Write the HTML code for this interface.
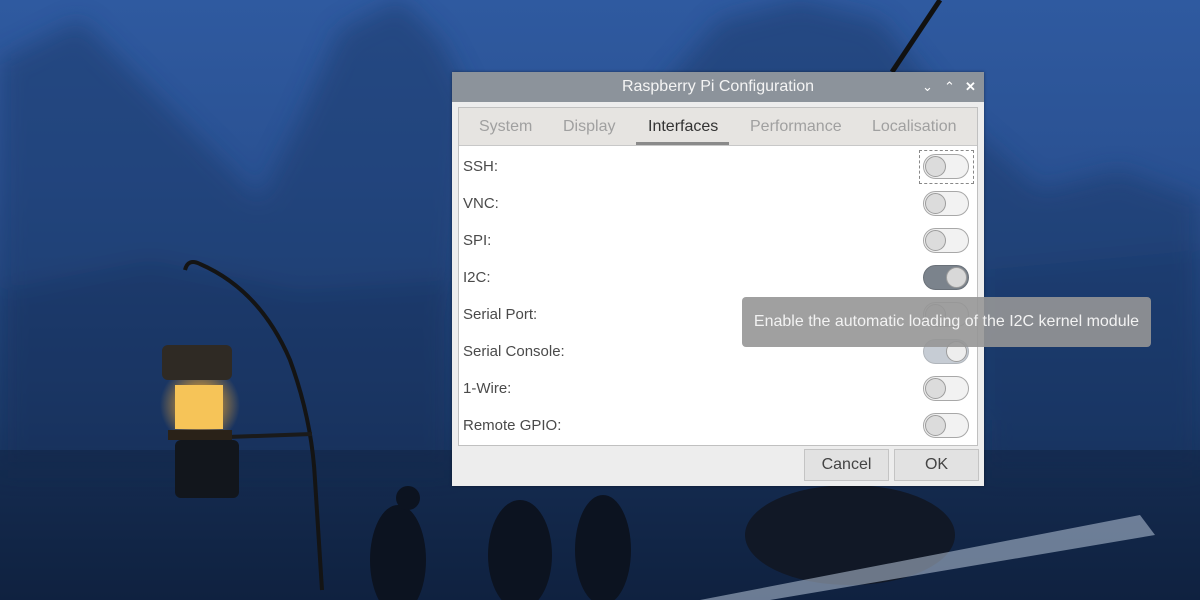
<!DOCTYPE html>
<html><head><meta charset="utf-8"><style>
*{margin:0;padding:0;box-sizing:border-box}
body{width:1200px;height:600px;overflow:hidden;position:relative;font-family:"Liberation Sans",sans-serif;
background:linear-gradient(180deg,#2f5aa0 0%,#2a5192 30%,#234780 50%,#1d3c6c 70%,#142b50 88%,#0f2140 100%)}
.bg{position:absolute;left:0;top:0}
.dlg{position:absolute;left:452px;top:72px;width:532px;height:414px;background:#ededed;box-shadow:0 0 3px rgba(0,0,0,.4)}
.title{height:30px;background:#8c939b;color:#f4f4f4;font-size:16px;text-align:center;line-height:30px;position:relative}
.ctl{position:absolute;top:0;font-size:13px;color:#fff}
.nb{position:absolute;left:6px;top:35px;width:520px;height:339px;border:1px solid #c0c0c0;background:#fff}
.tabs{height:38px;background:#e6e4e1;border-bottom:1px solid #c8c8c8;position:relative;font-size:16px;color:#a0a0a0}
.tabs span{position:absolute;top:10px}
.row{position:absolute;left:4px;font-size:15px;color:#4a4a4a}
.tg{position:absolute;left:464px;width:46px;height:25px;border-radius:13px;border:1px solid #a8a8a8;background:#f2f2f2}
.tg i{position:absolute;left:1px;top:1px;width:21px;height:21px;border-radius:50%;background:#dcdcdc;border:1px solid #9c9c9c}
.btn{position:absolute;top:377px;height:32px;border:1px solid #c4c4c4;background:#e2e2e2;font-size:16px;color:#444;text-align:center;line-height:30px}
.tip{position:absolute;left:742px;top:297px;width:409px;height:50px;background:rgba(150,150,150,.9);border-radius:4px;color:#f2f2f2;font-size:16px;line-height:50px;text-align:center}
</style></head><body>
<svg class="bg" width="1200" height="600">
<defs><radialGradient id="g" cx=".5" cy=".5" r=".5"><stop offset="0" stop-color="#ffe9a0"/><stop offset=".5" stop-color="#f0a830"/><stop offset="1" stop-color="#f0a830" stop-opacity="0"/></radialGradient>
<filter id="b"><feGaussianBlur stdDeviation="12"/></filter></defs>
<g filter="url(#b)" opacity=".55">
<path d="M0 60 L80 20 L150 90 L200 140 L260 200 L300 120 L340 30 L400 0 L440 40 L470 100 L452 320 L0 340Z" fill="#1c3a6c"/>
<path d="M660 90 L720 20 L800 0 L880 20 L960 120 L1040 190 L1120 170 L1200 200 L1200 420 L660 420Z" fill="#1c3a6c"/>
<path d="M0 290 L150 260 L300 290 L452 280 L452 470 L0 470Z" fill="#162f58"/>
<path d="M984 270 L1200 250 L1200 470 L984 470Z" fill="#17325e"/>
</g>
<rect x="0" y="450" width="1200" height="150" fill="#0f2240" opacity=".5"/>
<path d="M185 270 Q188 258 200 264 Q260 290 290 360 Q312 420 315 480 L322 590" fill="none" stroke="#141414" stroke-width="4"/>
<line x1="200" y1="438" x2="312" y2="434" stroke="#1a1a1a" stroke-width="4"/>
<circle cx="200" cy="405" r="40" fill="url(#g)" opacity=".6"/>
<rect x="162" y="345" width="70" height="35" rx="6" fill="#2f2a24"/>
<rect x="175" y="385" width="48" height="44" fill="#f6c458"/>
<rect x="168" y="430" width="64" height="10" fill="#2a2218"/>
<rect x="175" y="440" width="64" height="58" rx="6" fill="#12161c"/>
<ellipse cx="398" cy="560" rx="28" ry="55" fill="#0c1320"/>
<circle cx="408" cy="498" r="12" fill="#0c1320"/>
<ellipse cx="520" cy="555" rx="32" ry="55" fill="#0c1320"/>
<ellipse cx="603" cy="550" rx="28" ry="55" fill="#0c1320"/>
<ellipse cx="850" cy="535" rx="105" ry="50" fill="#111826"/>
<path d="M700 600 L1140 515 L1155 535 L770 600Z" fill="#b8c6d8" opacity=".55"/>
<line x1="892" y1="72" x2="940" y2="0" stroke="#111" stroke-width="5"/>
</svg>
<div class="dlg">
<div class="title">Raspberry Pi Configuration
<span class="ctl" style="left:470px">&#8964;</span><span class="ctl" style="left:492px">&#8963;</span><span class="ctl" style="left:513px;font-weight:bold">&#10005;</span></div>
<div class="nb">
<div class="tabs"><span style="left:20px">System</span><span style="left:104px">Display</span><span style="left:189px;color:#333">Interfaces</span><span style="left:291px">Performance</span><span style="left:413px">Localisation</span>
<div style="position:absolute;left:177px;top:34px;width:93px;height:3px;background:#8a8a8a"></div></div>
<div class="row" style="top:50px">SSH:</div>
<div class="row" style="top:87px">VNC:</div>
<div class="row" style="top:124px">SPI:</div>
<div class="row" style="top:161px">I2C:</div>
<div class="row" style="top:198px">Serial Port:</div>
<div class="row" style="top:235px">Serial Console:</div>
<div class="row" style="top:272px">1-Wire:</div>
<div class="row" style="top:309px">Remote GPIO:</div>
<div style="position:absolute;left:460px;top:42px;width:55px;height:34px;border:1px dashed #888"></div>
<div class="tg" style="top:46px"><i></i></div>
<div class="tg" style="top:83px"><i></i></div>
<div class="tg" style="top:120px"><i></i></div>
<div class="tg" style="top:157px;background:#7b838c;border-color:#6a7179"><i style="left:22px;background:#d8d8d8"></i></div>
<div class="tg" style="top:194px"><i></i></div>
<div class="tg" style="top:231px;background:#c6ccd4;border-color:#b0b5bb"><i style="left:22px;background:#eee"></i></div>
<div class="tg" style="top:268px"><i></i></div>
<div class="tg" style="top:305px"><i></i></div>
</div>
<div class="btn" style="left:352px;width:85px">Cancel</div>
<div class="btn" style="left:442px;width:85px">OK</div>
</div>
<div class="tip">Enable the automatic loading of the I2C kernel module</div>
</body></html>
